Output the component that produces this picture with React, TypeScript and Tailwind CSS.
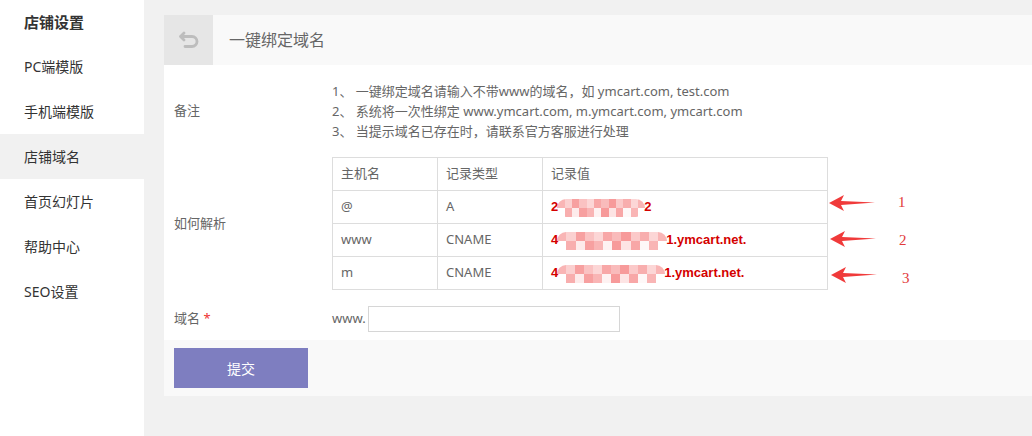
import React from "react";

const font = { fontFamily: '"Noto Sans", "Noto Sans CJK SC", sans-serif' };
const redFont = { fontFamily: '"Liberation Sans", "Noto Sans CJK SC", sans-serif' };

function Blob({ w }: { w: number }) {
  const cells = [0.55, 0.35, 0.7, 0.45, 0.3, 0.65, 0.5, 0.75, 0.4, 0.6, 0.3, 0.55];
  return (
    <span
      className="inline-flex h-[18px] rounded-[9px] overflow-hidden align-middle mx-[-1px]"
      style={{ width: w }}
    >
      {cells.map((o, i) => (
        <span key={i} className="flex-1 flex flex-col">
          <span className="flex-1" style={{ background: `rgba(244,120,120,${o})` }} />
          <span className="flex-1" style={{ background: `rgba(244,120,120,${(o + 0.25) % 0.8})` }} />
        </span>
      ))}
    </span>
  );
}

function Arrow() {
  return (
    <svg width="46" height="16" viewBox="0 0 46 16">
      <polygon points="0,8 15,0 12,6 46,7.5 12,10 15,16" fill="#f03a3a" />
    </svg>
  );
}

export default function App() {
  const menu = ["PC端模版", "手机端模版", "店铺域名", "首页幻灯片", "帮助中心", "SEO设置"];
  return (
    <div className="flex w-[1032px] h-[436px] bg-[#f1f1f1] overflow-hidden" style={font}>
      <aside className="w-[144px] bg-white shrink-0">
        <div className="h-[44px] flex items-center pl-6 text-[15px] font-bold text-[#333]">店铺设置</div>
        {menu.map((m) => (
          <div
            key={m}
            className={`h-[45px] flex items-center pl-6 text-[14px] text-[#333] ${m === "店铺域名" ? "bg-[#f1f1f1]" : ""}`}
          >
            {m}
          </div>
        ))}
      </aside>
      <main className="flex-1 pt-[15px] pl-5">
        <div className="h-[50px] bg-[#f9f9f9] flex items-center">
          <div className="w-[49px] h-[50px] bg-[#e6e6e6] flex items-center justify-center">
            <svg width="22" height="18" viewBox="0 0 22 18" fill="none" stroke="#bdbdbd" strokeWidth="2.8" strokeLinecap="round" strokeLinejoin="round">
              <path d="M6 2 L2.5 5.5 L6 9" />
              <path d="M3 5.5 H14 a5 5 0 0 1 0 10 H7" />
            </svg>
          </div>
          <div className="ml-4 text-[16px] text-[#666]">一键绑定域名</div>
        </div>
        <div className="bg-white pt-4 pb-[8px] text-[13px] text-[#666]">
          <div className="flex">
            <div className="w-[168px] pl-[10px] flex items-center">备注</div>
            <div className="leading-[20px]">
              <div>1、 一键绑定域名请输入不带www的域名，如 ymcart.com, test.com</div>
              <div>2、 系统将一次性绑定 www.ymcart.com, m.ymcart.com, ymcart.com</div>
              <div>3、 当提示域名已存在时，请联系官方客服进行处理</div>
            </div>
          </div>
          <div className="flex mt-4">
            <div className="w-[168px] pl-[10px] flex items-center">如何解析</div>
            <div className="relative">
              <table className="border-collapse">
                <tbody>
                  <tr className="h-[33px]">
                    <td className="w-[105px] border border-[#ddd] pl-2">主机名</td>
                    <td className="w-[105px] border border-[#ddd] pl-2">记录类型</td>
                    <td className="w-[285px] border border-[#ddd] pl-2">记录值</td>
                  </tr>
                  <tr className="h-[33px]">
                    <td className="border border-[#ddd] pl-2">@</td>
                    <td className="border border-[#ddd] pl-2">A</td>
                    <td className="border border-[#ddd] pl-2 font-bold text-[#d40000]" style={redFont}>
                      2<Blob w={88} />2
                    </td>
                  </tr>
                  <tr className="h-[33px]">
                    <td className="border border-[#ddd] pl-2">www</td>
                    <td className="border border-[#ddd] pl-2">CNAME</td>
                    <td className="border border-[#ddd] pl-2 font-bold text-[#d40000]" style={redFont}>
                      4<Blob w={110} />1.ymcart.net.
                    </td>
                  </tr>
                  <tr className="h-[33px]">
                    <td className="border border-[#ddd] pl-2">m</td>
                    <td className="border border-[#ddd] pl-2">CNAME</td>
                    <td className="border border-[#ddd] pl-2 font-bold text-[#d40000]" style={redFont}>
                      4<Blob w={108} />1.ymcart.net.
                    </td>
                  </tr>
                </tbody>
              </table>
              <div className="absolute left-[497px] top-[38px]"><Arrow /></div>
              <div className="absolute left-[498px] top-[74px]"><Arrow /></div>
              <div className="absolute left-[499px] top-[110px]"><Arrow /></div>
              <div className="absolute left-[566px] top-[34px] text-[15px] text-[#e23a3a]" style={{ fontFamily: '"Liberation Serif", serif' }}>1</div>
              <div className="absolute left-[567px] top-[72px] text-[15px] text-[#e23a3a]" style={{ fontFamily: '"Liberation Serif", serif' }}>2</div>
              <div className="absolute left-[570px] top-[110px] text-[15px] text-[#e23a3a]" style={{ fontFamily: '"Liberation Serif", serif' }}>3</div>
            </div>
          </div>
          <div className="flex mt-[16px] items-center">
            <div className="w-[168px] pl-[10px]">
              域名 <span className="text-[#e33]">*</span>
            </div>
            <span className="mr-[2px]">www.</span>
            <input className="w-[252px] h-[26px] border border-[#d6d6d6] outline-none" />
          </div>
        </div>
        <div className="bg-[#f9f9f9] pt-2 pb-2 pl-[10px]">
          <button className="w-[134px] h-[40px] bg-[#7e7ec0] text-white text-[14px]">提交</button>
        </div>
      </main>
    </div>
  );
}
